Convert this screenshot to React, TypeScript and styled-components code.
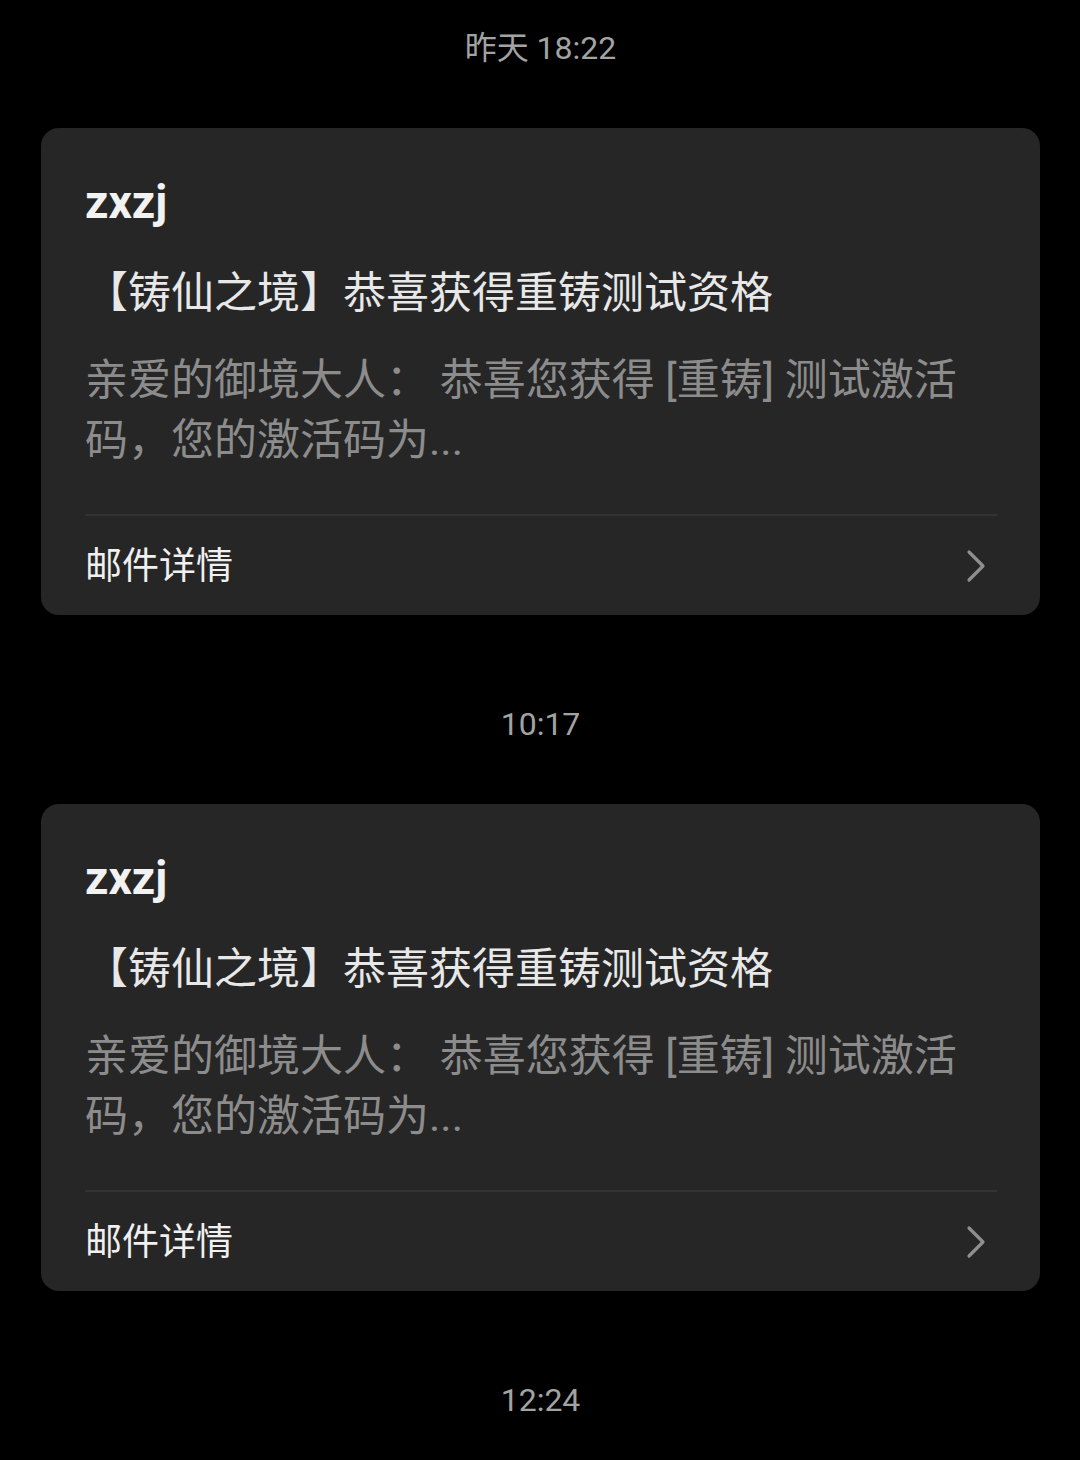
import styled, { createGlobalStyle } from "styled-components";

interface MailItem {
  time: string;
  sender: string;
  title: string;
  lines: string[];
}

const GlobalStyle = createGlobalStyle`
  html, body {
    margin: 0;
    padding: 0;
    background: #000;
  }
  body {
    font-family: Roboto, "Noto Sans CJK SC", sans-serif;
    -webkit-font-smoothing: antialiased;
  }
`;

const Page = styled.div`
  width: 1080px;
  min-height: 1460px;
  box-sizing: border-box;
  padding: 0 40px 0 41px;
  display: flex;
  flex-direction: column;
  gap: 61px;
  background: #000;
`;

const Group = styled.section`
  display: flex;
  flex-direction: column;
`;

const TimeStamp = styled.div`
  height: 96px;
  line-height: 96px;
  text-align: center;
  font-size: 32px;
  color: #a3a3a3;
`;

const Card = styled.div`
  margin-top: 32px;
  display: flex;
  flex-direction: column;
  padding: 0 43px 0 44px;
  background: #262626;
  border-radius: 18px;
`;

const Sender = styled.div`
  padding-top: 44px;
  font-size: 46px;
  font-weight: 700;
  line-height: 60px;
  color: #f2f2f2;
`;

const Title = styled.div`
  margin-top: 31px;
  font-size: 43px;
  line-height: 60px;
  color: #e8e8e8;
  white-space: nowrap;
`;

const Summary = styled.div`
  margin-top: 27px;
  font-size: 43px;
  line-height: 60px;
  color: #8c8c8c;
`;

const Divider = styled.div`
  margin-top: 44px;
  height: 2px;
  background: #333333;
`;

const Footer = styled.div`
  height: 99px;
  box-sizing: border-box;
  padding-bottom: 5px;
  display: flex;
  align-items: center;
  justify-content: space-between;
`;

const FooterLabel = styled.span`
  font-size: 37px;
  color: #f0f0f0;
`;

const Chevron = () => (
  <svg width="24" height="36" viewBox="0 0 24 36" style={{ marginRight: 8, marginTop: 5 }}>
    <path
      d="M4 4 L18 18 L4 32"
      fill="none"
      stroke="#8f8f8f"
      strokeWidth="3.2"
      strokeLinecap="round"
      strokeLinejoin="round"
    />
  </svg>
);

const summary = ["亲爱的御境大人： 恭喜您获得 [重铸] 测试激活", "码，您的激活码为..."];

const mails: MailItem[] = [
  { time: "昨天 18:22", sender: "zxzj", title: "【铸仙之境】恭喜获得重铸测试资格", lines: summary },
  { time: "10:17", sender: "zxzj", title: "【铸仙之境】恭喜获得重铸测试资格", lines: summary },
];

const MailCard = ({ mail }: { mail: MailItem }) => (
  <Card>
    <Sender>{mail.sender}</Sender>
    <Title>{mail.title}</Title>
    <Summary>
      {mail.lines.map((l) => (
        <div key={l}>{l}</div>
      ))}
    </Summary>
    <Divider />
    <Footer>
      <FooterLabel>邮件详情</FooterLabel>
      <Chevron />
    </Footer>
  </Card>
);

export default function App() {
  return (
    <>
      <GlobalStyle />
      <Page>
        {mails.map((m) => (
          <Group key={m.time}>
            <TimeStamp>{m.time}</TimeStamp>
            <MailCard mail={m} />
          </Group>
        ))}
        <Group>
          <TimeStamp>12:24</TimeStamp>
        </Group>
      </Page>
    </>
  );
}
